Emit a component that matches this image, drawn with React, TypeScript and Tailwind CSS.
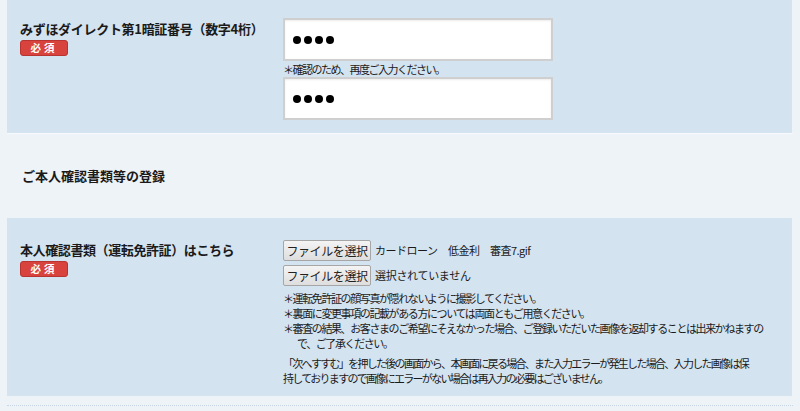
import React from "react";

const font = { fontFamily: '"Noto Sans CJK JP", "Noto Sans", sans-serif' };

function Badge() {
  return (
    <div className="mt-[2px] flex h-[16px] w-[48px] items-center justify-center rounded-[3px] border border-[#b83430] bg-[#d8433e] text-[10.5px] font-bold leading-none tracking-[3px] text-white">
      必須
    </div>
  );
}

function Dots() {
  return (
    <div className="flex items-center gap-[3px]">
      {[0, 1, 2, 3].map((i) => (
        <span key={i} className="block h-[8px] w-[8px] rounded-full bg-black" />
      ))}
    </div>
  );
}

function PwInput() {
  return (
    <div className="flex h-[43px] w-[270px] items-center border-2 border-[#cfcfcf] bg-white pl-[8px] shadow-[inset_0_1px_2px_rgba(0,0,0,0.08)]">
      <Dots />
    </div>
  );
}

function FileBtn() {
  return (
    <div className="flex h-[21px] w-[88px] items-center justify-center rounded-[2px] border border-[#a6a6a6] bg-gradient-to-b from-[#f4f4f4] to-[#dedede] text-[12px] leading-none tracking-[-0.4px] text-[#222]">
      ファイルを選択
    </div>
  );
}

export default function App() {
  return (
    <div className="h-[411px] w-[800px] overflow-hidden bg-[#eef3f8] text-[#1a1a1a]" style={font}>
      <div className="mx-[7px] flex w-[785px] bg-[#d4e3f0] pb-[13px] pl-[13px] pt-[18px]">
        <div className="w-[263px] pt-[2px]">
          <div className="text-[13px] font-bold leading-[18px] tracking-[-0.3px]">
            みずほダイレクト第1暗証番号（数字4桁）
          </div>
          <Badge />
        </div>
        <div className="flex flex-col">
          <PwInput />
          <div className="h-[16px] text-[11px] leading-[17px] tracking-[-1.5px]">
            ＊確認のため、再度ご入力ください。
          </div>
          <PwInput />
        </div>
      </div>
      <div className="mx-[7px] h-px bg-[#f7f9fc]" />
      <div className="h-[84px] pl-[22px] pt-[32px]">
        <div className="text-[13px] font-bold leading-[20px]">ご本人確認書類等の登録</div>
      </div>
      <div className="mx-[7px] flex w-[785px] bg-[#d4e3f0] pb-[10px] pl-[13px] pt-[22px]">
        <div className="w-[263px] pt-[1px]">
          <div className="text-[13px] font-bold leading-[18px] tracking-[-0.4px]">
            本人確認書類（運転免許証）はこちら
          </div>
          <Badge />
        </div>
        <div className="flex flex-col">
          <div className="flex items-center gap-[4px]">
            <FileBtn />
            <span className="text-[11px] tracking-[-0.5px]">カードローン　低金利　審査7.gif</span>
          </div>
          <div className="mt-[4px] flex items-center gap-[4px]">
            <FileBtn />
            <span className="text-[11px] tracking-[-0.3px]">選択されていません</span>
          </div>
          <div className="mt-[5px] whitespace-nowrap text-[11px] leading-[15px] tracking-[-1.4px]">
            <div>＊運転免許証の顔写真が隠れないように撮影してください。</div>
            <div>＊裏面に変更事項の記載がある方については両面ともご用意ください。</div>
            <div>＊審査の結果、お客さまのご希望にそえなかった場合、ご登録いただいた画像を返却することは出来かねますの</div>
            <div className="pl-[14px]">で、ご了承ください。</div>
          </div>
          <div className="mt-[5px] whitespace-nowrap text-[11px] leading-[15px] tracking-[-1.7px]">
            <div>「次へすすむ」を押した後の画面から、本画面に戻る場合、また入力エラーが発生した場合、入力した画像は保</div>
            <div>持しておりますので画像にエラーがない場合は再入力の必要はございません。</div>
          </div>
        </div>
      </div>
      <div className="mx-[7px] mt-[9px] border-t border-dotted border-[#c8d6e3]" />
    </div>
  );
}
